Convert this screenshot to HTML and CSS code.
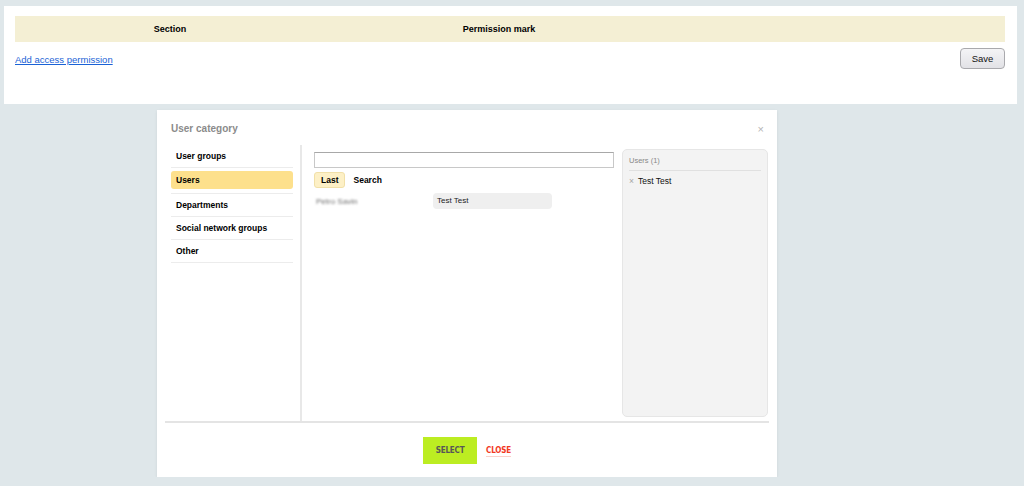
FILE: index.html
```html
<!DOCTYPE html>
<html lang="en">
<head>
  <meta charset="UTF-8">
  <title>Access permissions</title>
  <link rel="stylesheet" href="styles.css">
</head>
<body>
    <div class="panel">
        <table class="perm-table">
            <thead>
                <tr>
                    <th class="col-section">Section</th>
                    <th class="col-mark">Permission mark</th>
                    <th></th>
                </tr>
            </thead>
        </table>
        <div class="panel-actions">
            <a href="#" class="add-link">Add access permission</a>
            <button class="save-btn">Save</button>
        </div>
    </div>

    <div class="modal">
        <div class="modal-head">
            <span class="modal-title">User category</span>
            <span class="modal-close">&times;</span>
        </div>

        <div class="modal-body">
            <ul class="cat-list">
                <li><span>User groups</span></li>
                <li class="active"><span>Users</span></li>
                <li><span>Departments</span></li>
                <li><span>Social network groups</span></li>
                <li><span>Other</span></li>
            </ul>

            <div class="picker">
                <input type="text" class="picker-search">
                <div class="tabs">
                    <span class="tab active">Last</span>
                    <span class="tab">Search</span>
                </div>
                <div class="results">
                    <span class="result blurred">Petro Savin</span>
                    <span class="result pill">Test Test</span>
                </div>
            </div>

            <div class="selected">
                <div class="selected-head">Users (1)</div>
                <div class="selected-item"><span class="remove">&times;</span>Test Test</div>
            </div>
        </div>

        <div class="modal-foot">
            <button class="select-btn">SELECT</button>
            <a href="#" class="close-link">CLOSE</a>
        </div>
    </div>
</body>
</html>
```

FILE: styles.css
```css
body {
    font-family: 'Liberation Sans', Arial, sans-serif;
    margin: 0;
    padding: 0;
    background: #dfe7ea;
    color: #000;
}

.panel {
    background: #fff;
    margin: 6px 7px 0 4px;
    height: 98px;
    box-sizing: border-box;
    padding: 10px 12px 0 11px;
}

.perm-table {
    width: 100%;
    border-collapse: collapse;
}

.perm-table th {
    background: #f4efd4;
    height: 26px;
    padding: 0;
    font-size: 9px;
    font-weight: bold;
}

.col-section {
    width: 310px;
}

.col-mark {
    width: 348px;
}

.panel-actions {
    display: flex;
    justify-content: space-between;
    align-items: center;
    margin-top: 6px;
}

.add-link {
    font-size: 9.5px;
    color: #1a62d6;
    margin-top: 2px;
}

.save-btn {
    font-family: inherit;
    font-size: 9.5px;
    width: 45px;
    height: 21px;
    padding: 0;
    border: 1px solid #a9a9ad;
    border-radius: 4px;
    background: linear-gradient(#f4f4f6, #e2e2e6);
    color: #111;
}

.modal {
    background: #fff;
    width: 620px;
    height: 367px;
    margin: 6px 0 0 157px;
    padding: 0 8px;
    box-sizing: border-box;
    box-shadow: 0 1px 3px rgba(0, 0, 0, 0.08);
    display: flex;
    flex-direction: column;
}

.modal-head {
    height: 35px;
    display: flex;
    justify-content: space-between;
    align-items: center;
    padding: 0 5px 0 6px;
}

.modal-title {
    font-size: 10px;
    font-weight: bold;
    color: #8b8b8b;
    margin-top: 2px;
}

.modal-close {
    font-size: 11px;
    color: #b5b5b5;
    margin-top: 2px;
}

.modal-body {
    display: flex;
    height: 276px;
    border-bottom: 2px solid #e4e4e4;
}

.cat-list {
    list-style: none;
    margin: 0;
    padding: 0 7px 0 6px;
    width: 122px;
    border-right: 2px solid #e8e8e8;
}

.cat-list li {
    height: 22px;
    border-bottom: 1px solid #ececec;
    font-size: 8.5px;
    font-weight: bold;
}

.cat-list li span {
    display: block;
    height: 22px;
    line-height: 23px;
    padding-left: 5px;
}

.cat-list li.active span {
    background: #fde08c;
    border-radius: 3px;
    height: 18px;
    line-height: 18px;
    margin-top: 3px;
}

.picker {
    width: 320px;
    box-sizing: border-box;
    padding: 7px 8px 0 12px;
}

.picker-search {
    display: block;
    width: 300px;
    height: 16px;
    box-sizing: border-box;
    margin: 0;
    border: 1px solid #c8c8c8;
    border-top-color: #a8a8a8;
}

.tabs {
    display: flex;
    align-items: center;
    gap: 8px;
    margin-top: 4px;
    height: 16px;
}

.tab {
    font-size: 8.5px;
    font-weight: bold;
    line-height: 14px;
}

.tab.active {
    background: #fdf0c6;
    border: 1px solid #f1e0a8;
    border-radius: 3px;
    padding: 0 6px;
}

.results {
    display: flex;
    align-items: center;
    margin-top: 5px;
    height: 16px;
}

.result {
    font-size: 8px;
}

.blurred {
    width: 117px;
    padding-left: 2px;
    color: #6f6f6f;
    filter: blur(1px);
}

.pill {
    width: 119px;
    height: 16px;
    line-height: 16px;
    box-sizing: border-box;
    padding-left: 4px;
    background: #efefef;
    border-radius: 4px;
    color: #222;
}

.selected {
    width: 146px;
    margin: 4px 1px 4px 0;
    box-sizing: border-box;
    padding: 0 6px;
    background: #f3f3f3;
    border: 1px solid #e6e6e6;
    border-radius: 5px;
}

.selected-head {
    font-size: 7.5px;
    color: #888;
    line-height: 10px;
    padding: 6px 0 4px;
    border-bottom: 1px solid #e0e0e0;
}

.selected-item {
    font-size: 8.5px;
    line-height: 10px;
    margin-top: 5px;
    color: #111;
}

.remove {
    color: #a5a5a5;
    margin-right: 4px;
}

.modal-foot {
    flex: 1;
    display: flex;
    justify-content: center;
    align-items: center;
    gap: 9px;
}

.select-btn {
    font-family: 'DejaVu Sans Condensed', 'Liberation Sans', sans-serif;
    font-size: 8px;
    font-weight: bold;
    letter-spacing: -0.2px;
    width: 54px;
    height: 27px;
    padding: 0;
    border: none;
    background: #bced22;
    color: #575757;
}

.close-link {
    font-family: 'DejaVu Sans Condensed', 'Liberation Sans', sans-serif;
    font-size: 8px;
    font-weight: bold;
    letter-spacing: -0.2px;
    color: #f2381e;
    text-decoration: none;
    padding-bottom: 1px;
    margin-top: 3px;
    border-bottom: 1px solid #fbd0c9;
}
```
